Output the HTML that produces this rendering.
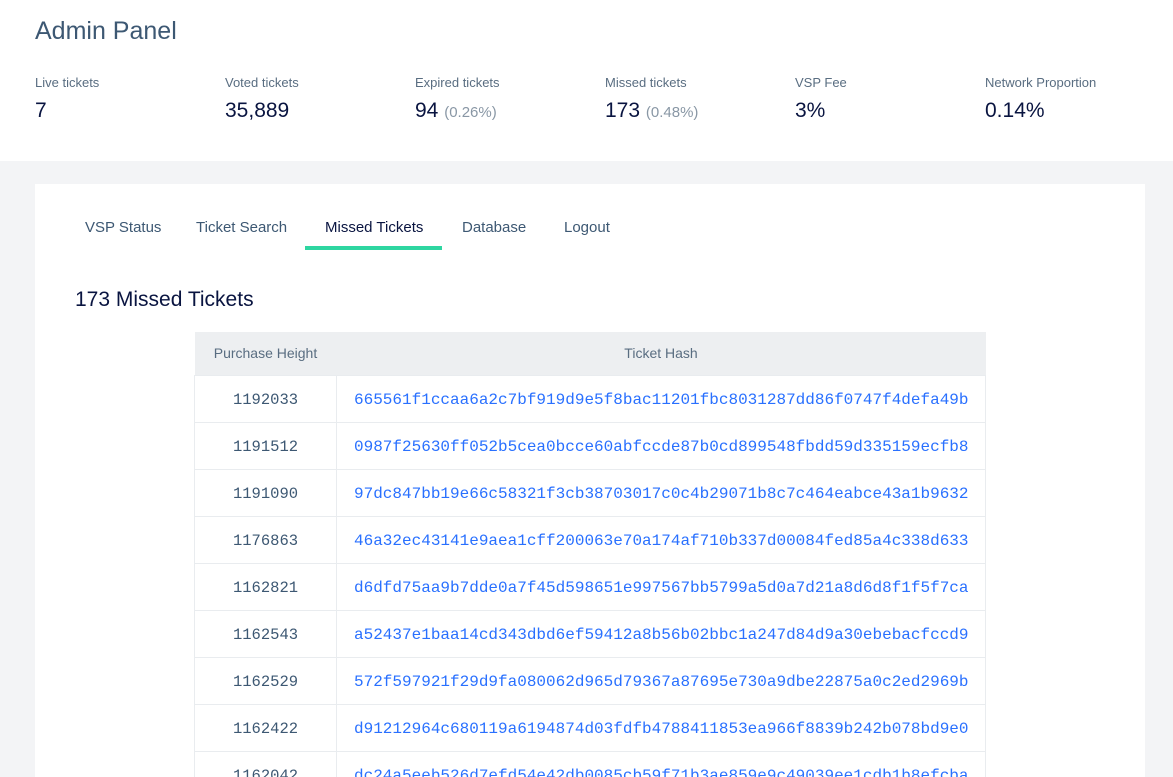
<!DOCTYPE html>
<html><head><meta charset="utf-8"><style>
*{box-sizing:border-box;margin:0;padding:0}
html,body{width:1173px;height:777px;overflow:hidden}
body{background:#f3f4f6;font-family:"Liberation Sans",sans-serif}
.top{background:#fff;height:161px;position:relative}
h1{position:absolute;left:35px;top:17px;font-weight:400;font-size:25px;color:#3d5873}
.stat{position:absolute;top:75px}
.stat .l{font-size:13px;color:#596d81}
.stat .v{font-size:21px;color:#091440;margin-top:9px}
.stat .v span{font-size:15px;color:#8997a5}
.card{position:absolute;left:35px;top:184px;width:1110px;height:593px;background:#fff;overflow:hidden}
.tab{position:absolute;top:35px;font-size:15px;color:#3d5873}
.ul{position:absolute;left:270px;top:62px;width:137px;height:4px;background:#2ed6a1}
h2{position:absolute;left:40px;top:104px;font-weight:400;font-size:21px;color:#091440}
table{position:absolute;left:159px;top:148px;width:792px;border-collapse:collapse}
th{background:#edeff1;height:43px;font-weight:400;font-size:14px;color:#596d81}
td{height:47px;border:1px solid #e9ecef;font-family:"Liberation Mono",monospace;font-size:16px;padding-top:3px}
td:first-child{width:142px;text-align:center;color:#3d5873;font-size:15.5px}
td:last-child{color:#2970ff;padding-left:17px}
</style></head><body>
<div class="top">
<h1>Admin Panel</h1>
<div class="stat" style="left:35px"><div class="l">Live tickets</div><div class="v">7</div></div>
<div class="stat" style="left:225px"><div class="l">Voted tickets</div><div class="v">35,889</div></div>
<div class="stat" style="left:415px"><div class="l">Expired tickets</div><div class="v">94 <span>(0.26%)</span></div></div>
<div class="stat" style="left:605px"><div class="l">Missed tickets</div><div class="v">173 <span>(0.48%)</span></div></div>
<div class="stat" style="left:795px"><div class="l">VSP Fee</div><div class="v">3%</div></div>
<div class="stat" style="left:985px"><div class="l">Network Proportion</div><div class="v">0.14%</div></div>
</div>
<div class="card">
<div class="tab" style="left:50px">VSP Status</div>
<div class="tab" style="left:161px">Ticket Search</div>
<div class="tab" style="left:290px;color:#091440">Missed Tickets</div>
<div class="tab" style="left:427px">Database</div>
<div class="tab" style="left:529px">Logout</div>
<div class="ul"></div>
<h2>173 Missed Tickets</h2>
<table>
<tr><th>Purchase Height</th><th>Ticket Hash</th></tr>
<tr><td>1192033</td><td>665561f1ccaa6a2c7bf919d9e5f8bac11201fbc8031287dd86f0747f4defa49b</td></tr>
<tr><td>1191512</td><td>0987f25630ff052b5cea0bcce60abfccde87b0cd899548fbdd59d335159ecfb8</td></tr>
<tr><td>1191090</td><td>97dc847bb19e66c58321f3cb38703017c0c4b29071b8c7c464eabce43a1b9632</td></tr>
<tr><td>1176863</td><td>46a32ec43141e9aea1cff200063e70a174af710b337d00084fed85a4c338d633</td></tr>
<tr><td>1162821</td><td>d6dfd75aa9b7dde0a7f45d598651e997567bb5799a5d0a7d21a8d6d8f1f5f7ca</td></tr>
<tr><td>1162543</td><td>a52437e1baa14cd343dbd6ef59412a8b56b02bbc1a247d84d9a30ebebacfccd9</td></tr>
<tr><td>1162529</td><td>572f597921f29d9fa080062d965d79367a87695e730a9dbe22875a0c2ed2969b</td></tr>
<tr><td>1162422</td><td>d91212964c680119a6194874d03fdfb4788411853ea966f8839b242b078bd9e0</td></tr>
<tr><td>1162042</td><td>dc24a5eeb526d7efd54e42db0085cb59f71b3ae859e9c49039ee1cdb1b8efcba</td></tr>
</table>
</div>
</body></html>
